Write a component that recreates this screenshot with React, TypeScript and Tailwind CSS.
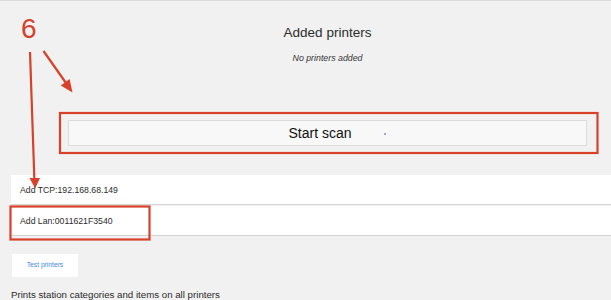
import React from 'react';

const RED = '#d8402a';

const Annotations: React.FC = () => (
  <>
    <div
      className="absolute left-[21px] top-[12px] text-[28px] leading-[32px] text-[#d8402a]"
      style={{ fontFamily: '"Liberation Sans", Arial, sans-serif' }}
    >
      6
    </div>
    <svg className="absolute left-0 top-0 pointer-events-none" width={611} height={300}>
      {/* vertical arrow down to the Lan row */}
      <line x1={30} y1={51} x2={34.4} y2={179} stroke={RED} strokeWidth={2.2} />
      <polygon points="29.5,177 40,177 35.2,187.5" fill={RED} />
      {/* diagonal arrow to start scan */}
      <line x1={43.5} y1={50} x2={66} y2={82} stroke={RED} strokeWidth={2.2} />
      <polygon points="60.8,84.4 69.6,78.1 72.5,91.5" fill={RED} />
      {/* boxes */}
      <rect x={60} y={112} width={537.5} height={40} fill="none" stroke={RED} strokeWidth={2.2} />
      <rect x={10.5} y={205.5} width={139} height={33} fill="none" stroke={RED} strokeWidth={2.2} />
    </svg>
  </>
);

const App: React.FC = () => {
  return (
    <div
      className="relative w-[611px] h-[300px] overflow-hidden bg-[#f1f1f1] border-t border-[#dadada] text-[#2b2b2b]"
      style={{ fontFamily: '"Liberation Sans", Arial, sans-serif' }}
    >
      <div className="w-[633px] ml-[11px]">
        <h2 className="pt-[24px] text-center text-[13.5px] leading-[16px] font-normal">Added printers</h2>
        <p className="mt-[11px] text-center text-[8.8px] leading-[12px] italic text-[#333]">No printers added</p>

        <div className="mt-[56px] mx-[57px]">
          <button className="relative w-full h-[26px] pr-[15px] pt-[1px] bg-[#f8f8f8] border border-[#dcdcdc] text-[14px] text-[#111]">
            Start scan
            <span className="absolute left-[315px] top-[12px] w-[2px] h-[2px] rounded-full bg-[#8b7fd6]" />
          </button>
        </div>

        <div className="mt-[29px] flex flex-col gap-[1px]">
          <div className="h-[30px] flex items-center pl-[9px] pt-[2px] bg-white border-b border-[#d4d4d4] text-[8.7px]">
            Add TCP:192.168.68.149
          </div>
          <div className="h-[30px] flex items-center pl-[9px] pt-[2px] bg-white border-b border-[#d4d4d4] text-[8.7px]">
            Add Lan:0011621F3540
          </div>
        </div>

        <button className="mt-[18px] ml-[1px] w-[66px] h-[23px] bg-white text-[6.7px] text-[#3f87e6]">
          Test printers
        </button>

        <p className="mt-[12px] text-[9.7px] leading-[12px] text-[#2b2b2b]">
          Prints station categories and items on all printers
        </p>
      </div>

      <Annotations />
    </div>
  );
};

export default App;
